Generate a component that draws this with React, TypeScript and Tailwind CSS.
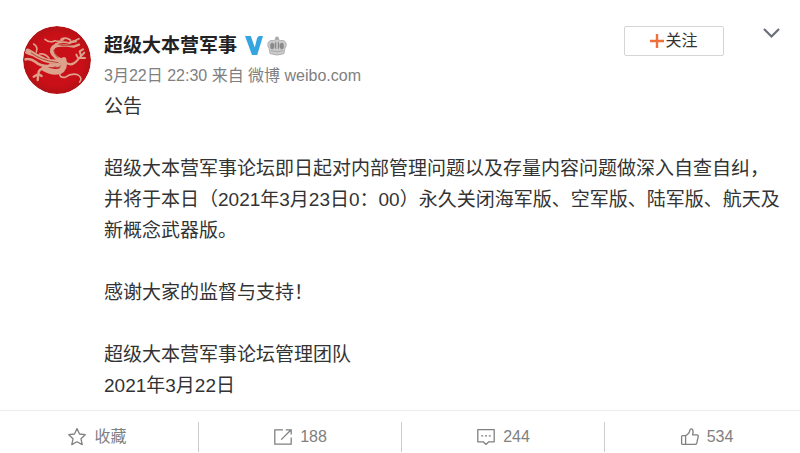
import { useState } from 'react';
import type { ReactNode } from 'react';

const FONT = "font-['Liberation_Sans','Noto_Sans_CJK_SC',sans-serif]";

const paragraphs = [
  '公告',
  '',
  '超级大本营军事论坛即日起对内部管理问题以及存量内容问题做深入自查自纠，并将于本日（2021年3月23日0：00）永久关闭海军版、空军版、陆军版、航天及新概念武器版。',
  '',
  '感谢大家的监督与支持！',
  '',
  '超级大本营军事论坛管理团队',
  '2021年3月22日',
];

function Avatar() {
  return (
    <svg viewBox="38 32 204 204" className="size-[68px] shrink-0 rounded-full" role="img" aria-label="超级大本营军事">
      <defs>
        <radialGradient id="red" cx="50%" cy="50%" r="50%">
          <stop offset="0.75" stopColor="#c90f17" />
          <stop offset="1" stopColor="#b21216" />
        </radialGradient>
      </defs>
      <circle cx="140" cy="134" r="102" fill="url(#red)" />
      <g fill="none" stroke="#dda28c" strokeLinecap="round" strokeLinejoin="round">
        {/* head and horns */}
        <path d="M104 72 Q118 84 134 76 Q148 82 160 72" strokeWidth="5" />
        <path d="M136 86 Q158 76 178 84 L206 70 M152 72 Q166 64 180 74" strokeWidth="5" />
        <path d="M138 92 L166 90 L190 94 L206 88 M180 80 L196 78" strokeWidth="7" />
        {/* neck and body */}
        <path d="M138 90 Q118 100 128 116 Q136 128 150 134" strokeWidth="12" />
        <path d="M158 138 Q128 142 104 134 Q80 124 52 106" strokeWidth="13" />
        <path d="M160 134 Q166 160 148 168 Q126 174 102 160" strokeWidth="17" />
        <path d="M118 152 Q92 154 76 140 Q60 128 46 132" strokeWidth="8" />
        <path d="M120 150 H152" strokeWidth="12" />
        {/* wing and tail strokes */}
        <path d="M70 86 Q84 94 78 110 M88 116 Q104 114 116 128 M46 112 Q60 122 76 120" strokeWidth="5" />
        {/* hind leg */}
        <path d="M104 158 Q84 160 84 176 L70 184 M84 176 L82 194 M84 176 L94 182" strokeWidth="7" />
        {/* front claws */}
        <path d="M164 140 Q184 156 200 136 L222 112 M204 130 L198 118 M208 128 L224 128 M212 122 L208 108 L218 102" strokeWidth="6" />
        <path d="M148 172 Q146 188 164 186 Q184 172 202 178 Q218 188 208 200" strokeWidth="5" />
      </g>
      <path d="M62 112 Q92 136 144 142 M132 154 Q146 160 152 150 M130 104 Q132 118 144 128 M150 90 L184 90" fill="none" stroke="#b5483a" strokeWidth="3" />
    </svg>
  );
}

function Verified() {
  return (
    <svg viewBox="0 0 18 20" className="w-[18px] h-5" aria-hidden="true">
      <path d="M0 0 H5.8 L9.8 11.5 L12 2.2 Q12.6 0 15 0 H18 L12.2 19 H7 Z" fill="#35a5e0" />
    </svg>
  );
}

function Crown() {
  return (
    <svg viewBox="0 0 20 20" className="size-5" aria-hidden="true">
      <circle cx="10" cy="2.4" r="1.9" fill="#a8a8a8" />
      <path d="M10 3.6 Q12.4 3.6 13.6 4.6 Q17 3.6 18.8 6.4 Q20.2 9.4 17.8 12.6 L17 17.6 Q10 20.6 3 17.6 L2.2 12.6 Q-.2 9.4 1.2 6.4 Q3 3.6 6.4 4.6 Q7.6 3.6 10 3.6 Z" fill="#cbcbcb" stroke="#a6a6a6" strokeWidth=".8" />
      <ellipse cx="5.2" cy="10" rx="2" ry="3.2" fill="#8a8a8a" />
      <ellipse cx="14.8" cy="10" rx="2" ry="3.2" fill="#8a8a8a" />
      <ellipse cx="10" cy="9.4" rx="2.4" ry="4" fill="#8a8a8a" />
      <path d="M10 4.6 V14" stroke="#d2d2d2" strokeWidth="1.4" />
      <path d="M4 14.6 Q10 17 16 14.6" stroke="#a8a8a8" strokeWidth="1" fill="none" />
    </svg>
  );
}

function Icon({ children }: { children: ReactNode }) {
  return (
    <svg viewBox="0 0 20 20" className="size-5 shrink-0" fill="none" stroke="#808080" strokeWidth="1.3" strokeLinejoin="round" aria-hidden="true">
      {children}
    </svg>
  );
}

const actions = [
  {
    name: '收藏',
    text: '收藏',
    icon: <path d="M10 1.6 L12.5 7 L18.2 7.7 L14 11.8 L15.2 17.6 L10 14.8 L4.8 17.6 L6 11.8 L1.8 7.7 L7.5 7 Z" />,
  },
  {
    name: '转发',
    text: '188',
    icon: <path d="M10 2.8 H1.8 V17.2 H18.2 V10.5 M8.2 12.6 L17.6 3.2 M12.8 2.8 H18.2 V7.6" strokeLinejoin="miter" />,
  },
  {
    name: '评论',
    text: '244',
    icon: (
      <>
        <path d="M1.8 2.6 H18.2 V14.8 H12.8 L10 17.4 L7.2 14.8 H1.8 Z" />
        <path d="M5.2 8.8 H7.2 M9 8.8 H11 M12.8 8.8 H14.8" />
      </>
    ),
  },
  {
    name: '赞',
    text: '534',
    icon: <path d="M5.6 8.6 H2.6 Q1.6 8.6 1.6 9.6 V16.4 Q1.6 17.4 2.6 17.4 H15 Q16.4 17.4 16.8 16 L18.2 9.6 Q18.4 7.8 16.8 7.8 H12.6 Q13.6 4.4 12.6 2.6 Q11.4 1.2 10 2.6 Q9.6 6.6 5.6 8.6 V17.4" />,
  },
];

export default function App() {
  const [followed, setFollowed] = useState(false);

  return (
    <article className={`${FONT} bg-white text-[#333] overflow-hidden`}>
      <div className="flex gap-[13px] pl-[23px] pr-5 pt-[26px] pb-[9px]">
        <Avatar />
        <div className="flex-1 min-w-0">
          <div className="flex items-start justify-between">
            <header className="pt-[5px]">
              <div className="flex items-center gap-2 h-[30px]">
                <h1 className="text-[19px] leading-[30px] font-bold text-[#222]">超级大本营军事</h1>
                <div className="flex items-center gap-1">
                  <Verified />
                  <Crown />
                </div>
              </div>
              <p className="text-base leading-[30px] text-[#808080]">
                <time>3月22日 22:30</time> 来自 <a href="#source">微博 weibo.com</a>
              </p>
            </header>
            <div className="flex items-start gap-[39px]">
              <button
                type="button"
                aria-pressed={followed}
                onClick={() => setFollowed(!followed)}
                className="flex items-center justify-center gap-px w-[100px] h-[30px] bg-white border border-[#d5d5d5] rounded-xs text-base text-[#333]"
              >
                <svg viewBox="0 0 14 14" className="size-[14px]" aria-hidden="true">
                  <path d="M7 0 V14 M0 7 H14" stroke="#f0703c" strokeWidth="2.4" />
                </svg>
                关注
              </button>
              <button type="button" aria-label="更多" className="h-[14px] w-[17px]">
                <svg viewBox="0 0 17 14" className="w-[17px] h-[14px]" aria-hidden="true">
                  <path d="M1 3 L8.5 10.5 L16 3" fill="none" stroke="#696e78" strokeWidth="2.2" />
                </svg>
              </button>
            </div>
          </div>
          <div className="text-[19px] leading-[31px]">
            {paragraphs.map((p, i) => (
              <p key={i} className="min-h-[31px]">{p}</p>
            ))}
          </div>
        </div>
      </div>
      <footer className="border-t border-[#ececec] pt-[11px]">
        <ul className="grid grid-cols-4 -ml-1 -mr-2 divide-x divide-[#ccc]">
          {actions.map(a => (
            <li key={a.name}>
              <button type="button" aria-label={a.name} className="flex items-center justify-center gap-[7px] w-full h-[30px] text-base text-[#808080]">
                <Icon>{a.icon}</Icon>
                <span>{a.text}</span>
              </button>
            </li>
          ))}
        </ul>
      </footer>
    </article>
  );
}
